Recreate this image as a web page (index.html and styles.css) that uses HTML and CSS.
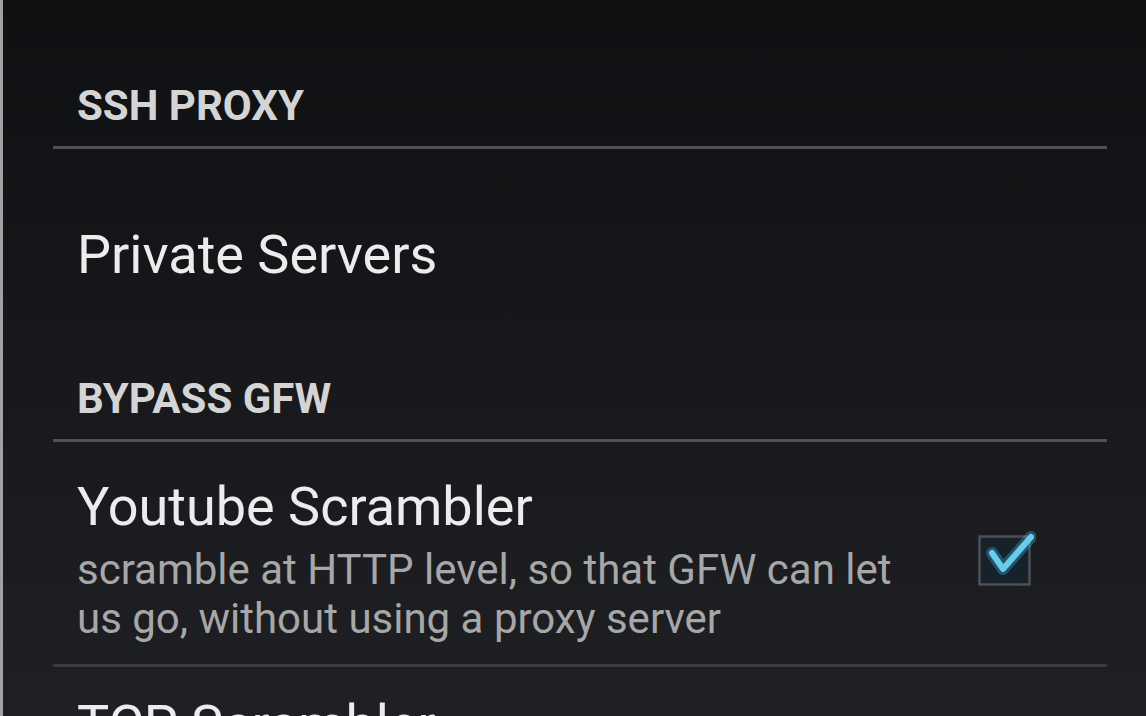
FILE: index.html
```
<!DOCTYPE html>
<html lang="en">
<head>
	<meta charset="UTF-8">
	<title>Settings</title>
	<link rel="stylesheet" href="styles.css">
</head>
<body>
    <div class="screen">
        <div class="category first">SSH PROXY</div>
        <div class="pref pref-plain">
            <div class="prefText">
                <div class="title">Private Servers</div>
            </div>
        </div>
        <div class="category">BYPASS GFW</div>
        <div class="pref pref-check divided">
            <div class="prefText">
                <div class="title">Youtube Scrambler</div>
                <div class="summary">scramble at HTTP level, so that GFW can let us go, without using a proxy server</div>
            </div>
            <svg class="checkbox" width="58" height="56" viewBox="0 0 58 56">
                <rect x="1.5" y="5.5" width="50" height="48" fill="#16212a" stroke="#4b5056" stroke-width="2.5"/>
                <path d="M14 22 L25 38 L53 6" fill="none" stroke="#33b5e5" stroke-opacity="0.35" stroke-width="12" stroke-linecap="round" stroke-linejoin="round"/>
                <path d="M14 22 L25 38 L53 6" fill="none" stroke="#6ccbea" stroke-width="6" stroke-linecap="round" stroke-linejoin="round"/>
            </svg>
        </div>
        <div class="pref pref-cut">
            <div class="prefText">
                <div class="title">TCP Scrambler</div>
            </div>
        </div>
    </div>
</body>
</html>
```

FILE: styles.css
```
* {
	padding: 0px;
	margin: 0px;
}
html, body {
	height: 100%;
	overflow: hidden;
}
body {
	background: linear-gradient(#0f1012, #1f2024);
	font-family: Roboto, "Liberation Sans", sans-serif;
}
.screen {
	height: 716px;
	border-left: 3px solid #a2a2a2;
	padding: 0 39px 0 50px;
	overflow: hidden;
}
/* section header with its rule */
.category {
	padding: 13px 0 16px 24px;
	font-size: 42px;
	line-height: 49px;
	font-weight: bold;
	color: #d4d4d4;
	border-bottom: 3px solid #4f5155;
}
.category.first {
	padding-top: 81px;
}
.pref {
	display: flex;
	align-items: center;
	padding-left: 24px;
}
.pref-plain {
	padding-top: 74px;
	padding-bottom: 74px;
}
.pref-check {
	padding-top: 33px;
	padding-bottom: 21px;
}
.pref-cut {
	padding-top: 26px;
}
.divided {
	border-bottom: 3px solid #3a3c40;
}
.prefText {
	flex: 1;
}
.title {
	font-size: 54px;
	line-height: 64px;
	color: #ececec;
}
.summary {
	margin-top: 6px;
	font-size: 42px;
	line-height: 49px;
	color: #a7a7a7;
}
.checkbox {
	flex: none;
	margin: 0 71px 0 40px;
}
```
